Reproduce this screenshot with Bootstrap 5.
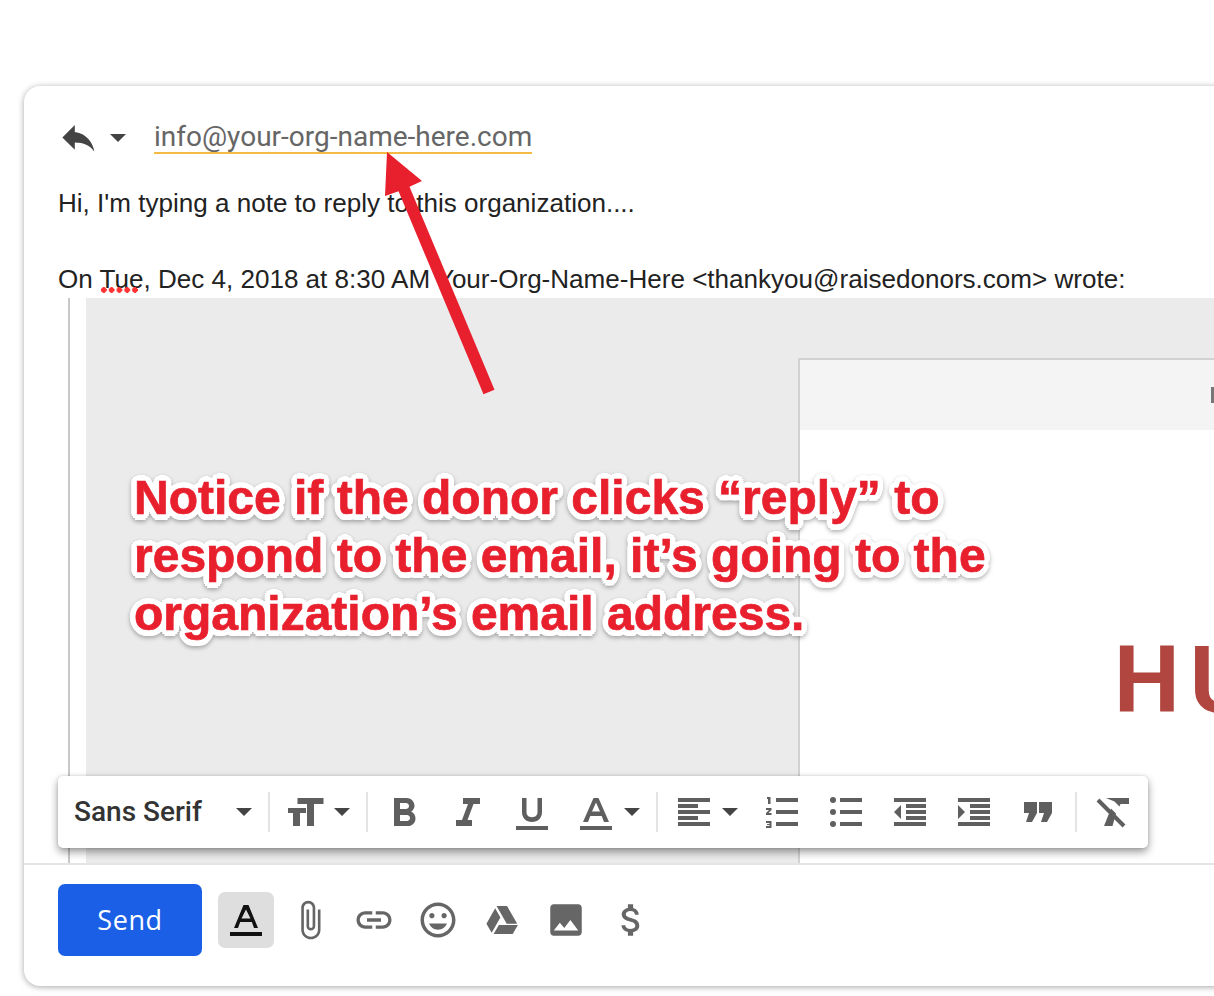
<!DOCTYPE html>
<html lang="en">
<head>
<meta charset="utf-8">
<title>Reply</title>
<link rel="stylesheet" href="https://cdn.jsdelivr.net/npm/bootstrap@5.3.0/dist/css/bootstrap.min.css">
<style>
html,body{margin:0;background:#fff;}
.stage{width:1214px;height:996px;overflow:hidden;position:relative;background:#fff;font-family:"Liberation Sans",Arial,sans-serif;}
.compose{width:1260px;height:900px;margin:86px 0 0 24px;background:#fff;border-radius:16px;box-shadow:0 1px 6px rgba(0,0,0,.35);overflow:hidden;display:flex;flex-direction:column;}
.replyrow{padding:30px 0 0 33px;height:98px;}
.replyrow svg{display:block;flex:none;}
.caretgap{margin-left:9px;}
.addr{margin-left:28px;font-family:Roboto,sans-serif;font-size:28px;line-height:30px;color:#666;border-bottom:2px solid #f5bb45;}
.msgline{height:38px;line-height:38px;font-size:26.05px;color:#222;padding-left:34px;white-space:nowrap;}
.squig{position:relative;}
.squig::after{content:"";position:absolute;left:0;bottom:1px;width:39px;height:6px;background:radial-gradient(circle at 3.800px 3px,#f33 2.600px,transparent 3px) repeat-x left top/7.800px 6px;}
.quoted{flex:1;margin-left:44px;border-left:2px solid #c8c8c8;padding-left:16px;min-height:0;}
.greyarea{height:100%;background:#ebebeb;padding:60px 0 0 712px;}
.panel{height:100%;border:2px solid #d2d2d2;border-right:0;border-bottom:0;background:#fff;}
.panelhead{height:70px;background:#f4f4f4;padding-left:411px;}
.headmark{width:8px;height:16px;background:#777;}
.brandname{font-family:Roboto,sans-serif;font-weight:700;font-size:93px;line-height:66px;letter-spacing:10px;color:#b0463f;padding:218px 0 0 314px;white-space:nowrap;}
.composefoot{height:123px;border-top:2px solid #e4e4e4;padding:19px 0 0 34px;}
.footcell{height:72px;}
.sendbtn{width:144px;height:72px;background:#1a5fe6;border:0;border-radius:7px;color:#fff;font-family:"Open Sans",sans-serif;font-size:27px;letter-spacing:.6px;padding:0;}
.sendbtn:hover{background:#1a5fe6;color:#fff;}
.fmtbox{width:56px;height:56px;margin:0 4px 0 16px;background:#dedede;border-radius:7px;}
.fcell{width:64px;flex:none;}
.fmtbar{position:absolute;left:58px;top:776px;width:1090px;height:72px;background:#fff;border-radius:5px;box-shadow:0 4px 8px rgba(0,0,0,.4),0 0 3px rgba(0,0,0,.12);padding-left:16px;color:#5f5f5f;}
.fmtbar svg{flex:none;display:block;}
.fontname{width:128px;font-family:Roboto,sans-serif;font-weight:500;font-size:28px;color:#333;white-space:nowrap;}
.vsep{width:2px;height:40px;background:#e4e4e4;flex:none;}
.mg34{margin-left:34px;}.mg16{margin-left:16px;}.mg14{margin-left:14px;}.mg6{margin-left:6px;}.mg15{margin-left:15px;}.mg20{margin-left:20px;}.mg19{margin-left:19px;}.mg22{margin-left:22px;}
.note{position:absolute;left:134px;top:469px;font-family:"Liberation Sans",Arial,sans-serif;font-weight:700;font-size:48px;line-height:58px;color:#e8202e;-webkit-text-stroke:.7px #e8202e;white-space:nowrap;filter:drop-shadow(0 2px 2px rgba(0,0,0,.3));
text-shadow:6px 0 .5px #fff,-6px 0 .5px #fff,0 6px .5px #fff,0 -6px .5px #fff,4.300px 4.300px .5px #fff,-4.300px 4.300px .5px #fff,4.300px -4.300px .5px #fff,-4.300px -4.300px .5px #fff,5.500px 2.300px .5px #fff,-5.500px 2.300px .5px #fff,5.500px -2.300px .5px #fff,-5.500px -2.300px .5px #fff,2.300px 5.500px .5px #fff,-2.300px 5.500px .5px #fff,2.300px -5.500px .5px #fff,-2.300px -5.500px .5px #fff,3px 0 0 #fff,-3px 0 0 #fff,0 3px 0 #fff,0 -3px 0 #fff;}
.arrowart{position:absolute;left:0;top:0;pointer-events:none;}
</style>
</head>
<body>
<div class="stage">
  <div class="compose">
    <div class="replyrow d-flex align-items-start">
      <div class="d-flex align-items-center">
        <svg width="44" height="44" viewBox="0 0 24.7 24.7" fill="#444"><path d="M10 9V5l-7 7 7 7v-4.100c5 0 8.500 1.600 11 5.100-1-5-4-10-11-11z"/></svg>
        <svg class="caretgap" width="16" height="8" viewBox="0 0 16 8" fill="#444"><path d="M0 0h16l-8 8z"/></svg>
        <span class="addr">info@your-org-name-here.com</span>
      </div>
    </div>
    <div class="msgline">Hi, I'm typing a note to reply to this organization....</div>
    <div class="msgline"></div>
    <div class="msgline">On <span class="squig">Tue</span>, Dec 4, 2018 at 8:30 AM Your-Org-Name-Here &lt;thankyou@raisedonors.com&gt; wrote:</div>
    <div class="quoted">
      <div class="greyarea">
        <div class="panel">
          <div class="panelhead d-flex align-items-center"><span class="headmark"></span></div>
          <div class="brandname">HU</div>
        </div>
      </div>
    </div>
    <div class="composefoot d-flex align-items-start">
      <button type="button" class="btn sendbtn">Send</button>
      <div class="footcell d-flex align-items-center">
        <div class="fmtbox d-flex align-items-center justify-content-center">
          <svg width="56" height="56" viewBox="0 0 56 56" fill="#111"><path fill-rule="evenodd" d="M25.500 13h5L40 36h-4l-2.100-6H22.200L20 36h-4zM23.500 26.500h9L28 17.500z"/><path d="M12 40h32v4H12z"/></svg>
        </div>
      </div>
      <div class="d-flex align-items-center fcell footcell justify-content-center"><svg width="42" height="42" viewBox="0 0 24 24" fill="#666"><path d="M16.500 6v11.500c0 2.210-1.790 4-4 4s-4-1.790-4-4V5c0-1.380 1.120-2.500 2.500-2.500s2.500 1.120 2.500 2.500v10.500c0 .55-.45 1-1 1s-1-.45-1-1V6H10v9.500c0 1.380 1.120 2.500 2.500 2.500s2.500-1.120 2.500-2.500V5c0-2.210-1.790-4-4-4S7 2.790 7 5v12.500c0 3.040 2.460 5.500 5.500 5.500s5.500-2.460 5.500-5.500V6h-1.500z"/></svg></div>
      <div class="d-flex align-items-center fcell footcell justify-content-center"><svg width="42" height="42" viewBox="0 0 24 24" fill="#666"><path d="M3.900 12c0-1.710 1.390-3.100 3.100-3.100h4V7H7c-2.760 0-5 2.240-5 5s2.240 5 5 5h4v-1.900H7c-1.710 0-3.100-1.390-3.100-3.100zM8 13h8v-2H8v2zm9-6h-4v1.900h4c1.710 0 3.100 1.390 3.100 3.100s-1.390 3.100-3.100 3.100h-4V17h4c2.760 0 5-2.240 5-5s-2.240-5-5-5z"/></svg></div>
      <div class="d-flex align-items-center fcell footcell justify-content-center"><svg width="42" height="42" viewBox="0 0 24 24" fill="#666"><path d="M11.990 2C6.470 2 2 6.480 2 12s4.470 10 9.990 10C17.520 22 22 17.520 22 12S17.520 2 11.990 2zM12 20c-4.420 0-8-3.580-8-8s3.580-8 8-8 8 3.580 8 8-3.580 8-8 8zm3.500-9c.83 0 1.500-.67 1.500-1.500S16.330 8 15.500 8 14 8.670 14 9.500s.67 1.500 1.500 1.500zm-7 0c.83 0 1.500-.67 1.500-1.500S9.330 8 8.500 8 7 8.670 7 9.500 7.670 11 8.500 11zm3.500 6.500c2.330 0 4.310-1.460 5.110-3.500H6.890c.8 2.040 2.780 3.500 5.110 3.500z"/></svg></div>
      <div class="d-flex align-items-center fcell footcell justify-content-center"><svg width="42" height="42" viewBox="0 0 24 24" fill="#666"><path d="M8.900 4h6l5.800 10.200H14.700zM8.100 5.300l3 5.200-5 8.800-3-5.200zM7.200 20l3-5.200h10.900l-3 5.200z"/></svg></div>
      <div class="d-flex align-items-center fcell footcell justify-content-center"><svg width="42" height="42" viewBox="0 0 24 24" fill="#666"><path d="M21 19V5c0-1.100-.9-2-2-2H5c-1.100 0-2 .9-2 2v14c0 1.100.9 2 2 2h14c1.100 0 2-.9 2-2zM8.500 13.500l2.500 3.010L14.500 12l4.500 6H5l3.500-4.500z"/></svg></div>
      <div class="d-flex align-items-center fcell footcell justify-content-center"><svg width="42" height="42" viewBox="0 0 24 24" fill="#666"><path d="M11.800 10.900c-2.270-.59-3-1.200-3-2.150 0-1.090 1.010-1.850 2.700-1.850 1.780 0 2.440.85 2.500 2.100h2.210c-.07-1.720-1.120-3.300-3.210-3.810V3h-3v2.160c-1.940.42-3.500 1.680-3.500 3.610 0 2.310 1.910 3.460 4.700 4.130 2.500.6 3 1.480 3 2.410 0 .69-.49 1.790-2.700 1.790-2.060 0-2.870-.92-2.980-2.100h-2.200c.12 2.190 1.760 3.420 3.680 3.830V21h3v-2.150c1.950-.37 3.500-1.500 3.500-3.550 0-2.840-2.430-3.810-4.700-4.400z" transform="translate(.8 0)"/></svg></div>
    </div>
  </div>

  <div class="fmtbar d-flex align-items-center">
    <span class="fontname">Sans Serif</span>
    <svg class="mg34" width="16" height="8" viewBox="0 0 16 8" fill="#444"><path d="M0 0h16l-8 8z"/></svg>
    <span class="vsep mg16"></span>
    <svg class="mg14" width="44" height="44" viewBox="0 0 44 44" fill="#5f5f5f"><path d="M13.500 8h26v6H30v22h-7V14h-9.500zM4 18h18v5h-6v13H9V23H4z"/></svg>
    <svg class="mg6" width="16" height="8" viewBox="0 0 16 8" fill="#444"><path d="M0 0h16l-8 8z"/></svg>
    <span class="vsep mg16"></span>
    <svg class="mg15" width="44" height="44" viewBox="0 0 44 44" fill="#5f5f5f"><path transform="translate(-3 0) scale(2)" d="M15.600 10.790c.97-.67 1.650-1.770 1.650-2.790 0-2.260-1.750-4-4-4H7v14h7.040c2.090 0 3.710-1.700 3.710-3.790 0-1.520-.86-2.820-2.150-3.420zM10 6.500h3c.83 0 1.500.67 1.500 1.500s-.67 1.500-1.500 1.500h-3v-3zm3.500 9H10v-3h3.500c.83 0 1.500.67 1.500 1.500s-.67 1.500-1.500 1.500z"/></svg>
    <svg class="mg19" width="44" height="44" viewBox="0 0 44 44" fill="#5f5f5f"><path d="M17 8h17v6h-6.500l-6 16H26v6H10v-6h6l6-16h-5z"/></svg>
    <svg class="mg20" width="44" height="44" viewBox="0 0 44 44" fill="#5f5f5f"><path d="M12 8h4.500v14c0 3.200 2 5.200 5.500 5.200s5.500-2 5.500-5.200V8H32v14c0 6-4 10-10 10s-10-4-10-10z"/><path d="M6 36h32v4H6z"/></svg>
    <svg class="mg20" width="44" height="44" viewBox="0 0 44 44" fill="#5f5f5f"><path fill-rule="evenodd" d="M19.500 8h5l10.500 24h-5l-2.300-6H16.300L14 32H9zM18 21.500h8L22 12.500z"/><path d="M6 36h32v4H6z"/></svg>
    <svg class="mg6" width="16" height="8" viewBox="0 0 16 8" fill="#444"><path d="M0 0h16l-8 8z"/></svg>
    <span class="vsep mg16"></span>
    <svg class="mg14" width="44" height="44" viewBox="0 0 44 44" fill="#5f5f5f"><path d="M6 8h32v4H6zM6 14h20v4H6zM6 20h32v4H6zM6 26h20v4H6zM6 32h32v4H6z"/></svg>
    <svg class="mg6" width="16" height="8" viewBox="0 0 16 8" fill="#444"><path d="M0 0h16l-8 8z"/></svg>
    <svg class="mg22" width="44" height="44" viewBox="0 0 44 44" fill="#5f5f5f"><path d="M16 8h22v4H16zM16 20h22v4H16zM16 32h22v4H16zM7 7h3.500v7H8V9H7zM6 18h5.500v2l-3 3h3v2H6v-2l3-3H6zM6 31h5.500v7H6v-2h3.500v-1H7v-1h2.500v-1H6z"/></svg>
    <svg class="mg20" width="44" height="44" viewBox="0 0 44 44" fill="#5f5f5f"><path d="M16 8h22v4H16zM16 20h22v4H16zM16 32h22v4H16z"/><circle cx="9" cy="10" r="3"/><circle cx="9" cy="22" r="3"/><circle cx="9" cy="34" r="3"/></svg>
    <svg class="mg20" width="44" height="44" viewBox="0 0 44 44" fill="#5f5f5f"><path d="M6 8h32v4H6zM6 32h32v4H6zM18 14h20v4H18zM18 20h20v4H18zM18 26h20v4H18zM6 22l7-7v14z"/></svg>
    <svg class="mg20" width="44" height="44" viewBox="0 0 44 44" fill="#5f5f5f"><path d="M6 8h32v4H6zM6 32h32v4H6zM18 14h20v4H18zM18 20h20v4H18zM18 26h20v4H18zM13 22l-7-7v14z"/></svg>
    <svg class="mg20" width="44" height="44" viewBox="0 0 44 44" fill="#5f5f5f"><path d="M8 12h13v11l-5 9h-6l3-9H8zM23 12h13v11l-5 9h-6l3-9h-5z"/></svg>
    <span class="vsep mg15"></span>
    <svg class="mg14" width="44" height="44" viewBox="0 0 44 44" fill="#5f5f5f"><path d="M15 8h23v6h-8.500l-1 2.500-5-5zM20 18.500l5 5L21.500 36H13z"/><path d="M7 10l26 26" stroke="#5f5f5f" stroke-width="4" fill="none"/></svg>
  </div>

  <div class="note">Notice if the donor clicks “reply” to<br>respond to the email, it’s going to the<br>organization’s email address.</div>

  <svg class="arrowart" width="1214" height="996" viewBox="0 0 1214 996"><polygon fill="#e8202e" points="387,152 422,181 409.500,186.700 494.500,389.700 483.500,394.300 398.500,191.300 385,196"/></svg>
</div>
<script src="https://cdn.jsdelivr.net/npm/bootstrap@5.3.0/dist/js/bootstrap.bundle.min.js"></script>
</body>
</html>
